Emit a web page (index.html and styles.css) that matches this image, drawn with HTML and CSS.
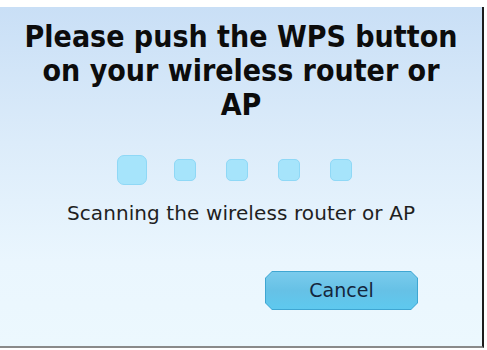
FILE: index.html
```html
<!DOCTYPE html>
<html>
<head>
<meta charset="utf-8">
<link rel="stylesheet" href="styles.css">
</head>
<body>
<div class="dialog">
  <h1 class="title">Please push the WPS button on your wireless router or AP</h1>
  <div class="progress">
    <span class="dot big"></span>
    <span class="dot"></span>
    <span class="dot"></span>
    <span class="dot"></span>
    <span class="dot"></span>
  </div>
  <p class="status">Scanning the wireless router or AP</p>
  <div class="actions">
    <button class="btn"><span class="btn-label">Cancel</span></button>
  </div>
</div>
</body>
</html>
```
FILE: styles.css
```css
html, body {
  margin: 0;
  padding: 0;
  background: #ffffff;
}
body {
  width: 487px;
  height: 350px;
  overflow: hidden;
  padding-top: 7px;
  box-sizing: border-box;
}
.dialog {
  width: 484px;
  height: 341px;
  box-sizing: border-box;
  border-right: 2px solid #1c1c1c;
  border-bottom: 2px solid #8a8a8a;
  background: linear-gradient(to bottom, #c9dff6 0%, #dcecfa 40%, #eaf6fe 75%, #ecf8fe 100%);
  display: flex;
  flex-direction: column;
  align-items: center;
}
.title {
  margin: 13px 0 0 0;
  width: 440px;
  text-align: center;
  font-family: "DejaVu Sans Condensed", "DejaVu Sans", sans-serif;
  font-weight: bold;
  font-size: 30px;
  line-height: 34px;
  color: #0c0c0c;
}
.progress {
  align-self: flex-start;
  display: flex;
  align-items: center;
  margin-top: 33px;
  margin-left: 117px;
  gap: 30px;
}
.dot {
  display: block;
  width: 22px;
  height: 22px;
  border-radius: 5px;
  background: #a6e4fb;
  border: 1px solid #8fd8f6;
  box-sizing: border-box;
}
.dot.big {
  width: 30px;
  height: 30px;
  border-radius: 7px;
  margin-right: -3px;
}
.status {
  margin: 16px 0 0 0;
  font-family: "DejaVu Sans", sans-serif;
  font-size: 20px;
  line-height: 24px;
  color: #1f1f1f;
  letter-spacing: 0.1px;
}
.actions {
  align-self: stretch;
  display: flex;
  justify-content: flex-end;
  padding-right: 64px;
  margin-top: 46px;
}
.btn {
  width: 153px;
  height: 39px;
  border: none;
  padding: 0;
  background: #3fa6d2;
  clip-path: polygon(7px 0, calc(100% - 7px) 0, 100% 7px, 100% calc(100% - 7px), calc(100% - 7px) 100%, 7px 100%, 0 calc(100% - 7px), 0 7px);
  position: relative;
}
.btn::before {
  content: "";
  position: absolute;
  inset: 1px;
  background: linear-gradient(to bottom, #7acbec 0%, #66c1e6 50%, #5ec9ef 100%);
  clip-path: polygon(6px 0, calc(100% - 6px) 0, 100% 6px, 100% calc(100% - 6px), calc(100% - 6px) 100%, 6px 100%, 0 calc(100% - 6px), 0 6px);
}
.btn-label {
  position: relative;
  font-family: "DejaVu Sans", sans-serif;
  font-size: 19px;
  color: #14263c;
  top: -1px;
}
```
